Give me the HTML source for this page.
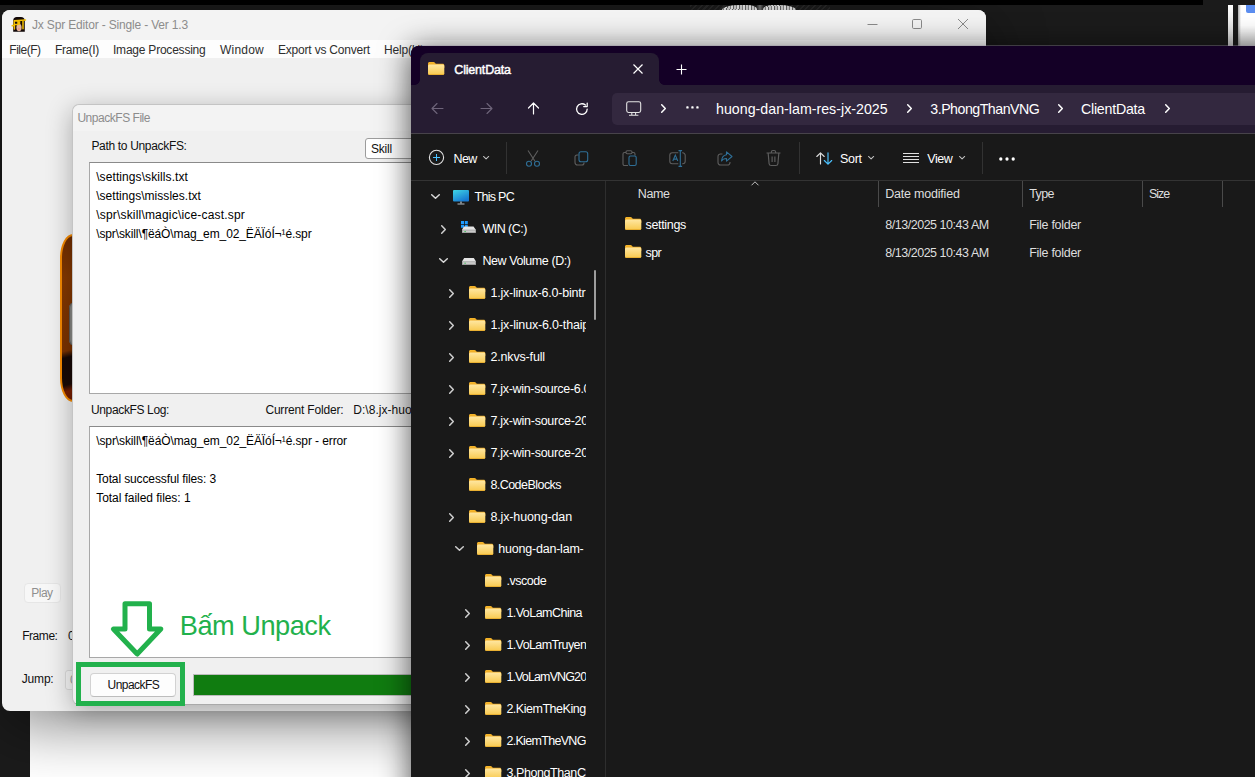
<!DOCTYPE html>
<html><head><meta charset="utf-8"><title>screen</title>
<style>
html,body{margin:0;padding:0;}
body{width:1255px;height:777px;overflow:hidden;background:#1b1b1b;font-family:"Liberation Sans",sans-serif;}
#root{position:relative;width:1255px;height:777px;overflow:hidden;background:#1b1b1b;}
.a{position:absolute;}
.t{position:absolute;white-space:nowrap;}
svg{position:absolute;overflow:visible;}
#mw{left:2px;top:10px;width:984px;height:701px;border-radius:8px;background:#f0f0f0;box-shadow:0 16px 60px rgba(0,0,0,0.45);}
#mwc{left:0;top:0;width:984px;height:701px;border-radius:8px;overflow:hidden;}
#dlg{left:72px;top:104px;width:620px;height:601px;border-radius:7px 7px 0 7px;background:#f0f0f0;border:1px solid #c4c4c4;border-bottom-color:#a9a9a9;box-sizing:border-box;box-shadow:0 6px 26px rgba(0,0,0,0.3);}
#ex{left:411px;top:46px;width:900px;height:800px;border-radius:8px;background:#191919;box-shadow:0 4px 30px 2px rgba(0,0,0,0.62);}
#exc{left:0;top:0;width:900px;height:800px;border-radius:8px;overflow:hidden;}

</style></head><body>
<div id="root">
<div class="a" style="left:0;top:0;width:1203px;height:5px;background:#000"></div><div class="a" style="left:1228px;top:5px;width:5px;height:41px;background:linear-gradient(#fff,#d0d0d0)"></div><div class="a" style="left:1237.5px;top:5px;width:18px;height:41px;background:linear-gradient(90deg,#aaa 0,#fff 3px,#fff),#fff"></div><div class="a" style="left:1237.5px;top:5px;width:18px;height:41px;background:linear-gradient(rgba(255,255,255,0),rgba(255,255,255,0) 50%,rgba(0,0,0,0.18))"></div><div class="a" style="left:1246px;top:5px;width:12px;height:8px;border-radius:0 0 0 2px;background:#5b8def"></div><div class="a" style="left:690px;top:5px;width:140px;height:5px;background:repeating-linear-gradient(135deg,#2e2e2e 0 1.500px,#1c1c1c 1.500px 4px);opacity:.7"></div><div class="a" style="left:722px;top:5px;width:35px;height:5px;border-radius:18px 10px 0 0/5px 4px 0 0;background:repeating-linear-gradient(100deg,#d6d6d6 0 2px,#8a8a8a 2px 3px,#efefef 3px 5px,#6a6a6a 5px 6px)"></div><div class="a" style="left:763px;top:5px;width:33px;height:5px;border-radius:10px 18px 0 0/4px 5px 0 0;background:repeating-linear-gradient(80deg,#d6d6d6 0 2px,#8a8a8a 2px 3px,#efefef 3px 5px,#6a6a6a 5px 6px)"></div><div class="a" style="left:757px;top:5px;width:6px;height:5px;background:linear-gradient(90deg,#333,#777,#333)"></div><div class="a" style="left:30px;top:700px;width:390px;height:80px;background:#fff"></div><div id="mw" class="a"><div id="mwc" class="a"><div class="a" style="left:0;top:0;width:984px;height:30px;background:#f3f3f3"></div><div class="a" style="left:0;top:30px;width:984px;height:18px;background:#fdfdfd"></div></div></div><svg style="left:11px;top:16px" width="16" height="17" viewBox="11 16 16 17"><path d="M13.200 31.800V20.500c0-2 1.500-3.500 3.500-3.500h4.300c2.200 0 3.800 1.600 3.800 3.800v11z" fill="#120808"/><ellipse cx="19" cy="27.500" rx="2.600" ry="3.800" fill="#e3b49a"/><ellipse cx="18.800" cy="29" rx="1" ry=".8" fill="#f08a6a"/><path d="M12.200 25.800l2-.6V20.800l11.300-.7M14.800 21h3.200v3.600h-3M14.400 25.500v3.500M19.500 20.600v3.400M23 20.700v8" stroke="#f5c000" stroke-width="1.500" fill="none" stroke-linecap="round" stroke-linejoin="round"/></svg><div class="t" style="left:32.0px;top:19.0px;font-size:12px;line-height:12px;color:#8c8c8c;letter-spacing:-0.169px;">Jx Spr Editor - Single - Ver 1.3</div>
<svg style="left:866px;top:18px" width="104" height="12" viewBox="0 0 104 12" fill="none" stroke="#8a8a8a" stroke-width="1"><path d="M1.5 6.5h10"/><rect x="46.5" y="1.5" width="9" height="9" rx="1.2"/><path d="M92 1l10 10M102 1l-10 10"/></svg><div class="t" style="left:9.3px;top:44.0px;font-size:12px;line-height:12px;color:#2e2e2e;letter-spacing:-0.494px;">File(F)</div>
<div class="t" style="left:55.0px;top:44.0px;font-size:12px;line-height:12px;color:#2e2e2e;letter-spacing:-0.249px;">Frame(I)</div>
<div class="t" style="left:113.0px;top:44.0px;font-size:12px;line-height:12px;color:#2e2e2e;letter-spacing:-0.221px;">Image Processing</div>
<div class="t" style="left:220.0px;top:44.0px;font-size:12px;line-height:12px;color:#2e2e2e;letter-spacing:0.220px;">Window</div>
<div class="t" style="left:278.0px;top:44.0px;font-size:12px;line-height:12px;color:#2e2e2e;letter-spacing:-0.198px;">Export vs Convert</div>
<div class="t" style="left:384.0px;top:44.0px;font-size:12px;line-height:12px;color:#2e2e2e;letter-spacing:-0.191px;">Help(H)</div>
<div class="a" style="left:60px;top:234px;width:30px;height:168px;border-radius:13px/24px;border:2px solid #f58a00;box-sizing:border-box;background:linear-gradient(166deg,#6e2c00 0,#843800 25%,#7a3200 68%,#140806 72%,#1a0a06 88%,#7a1e00 92%,#6a1a00 100%)"></div><div class="a" style="left:68.5px;top:302px;width:12px;height:44px;border-radius:6px;background:#8c8c88;box-shadow:inset 1px 0 1px #555"></div><div class="a" style="left:24px;top:583px;width:36.5px;height:20px;border-radius:4px;background:#f7f7f7;border:1px solid #e6e6e6;box-sizing:border-box"></div><div class="t" style="left:31.3px;top:587.0px;font-size:12px;line-height:12px;color:#8f8f8f;letter-spacing:-0.536px;">Play</div>
<div class="t" style="left:22.2px;top:630.0px;font-size:12px;line-height:12px;color:#111;letter-spacing:-0.450px;">Frame:</div>
<div class="t" style="left:68.0px;top:630.0px;font-size:12px;line-height:12px;color:#111;letter-spacing:0.000px;">0</div>
<div class="t" style="left:21.8px;top:673.0px;font-size:12px;line-height:12px;color:#111;letter-spacing:-0.195px;">Jump:</div>
<div class="a" style="left:65px;top:670px;width:30px;height:19.5px;border-radius:3px;background:#f7f7f7;border:1px solid #dcdcdc;box-sizing:border-box"></div><div class="t" style="left:70.0px;top:674.0px;font-size:12px;line-height:12px;color:#999;letter-spacing:0.000px;">0</div>
<div id="dlg" class="a"><div class="a" style="left:0;top:0;width:618px;height:26px;background:#f3f3f3;border-radius:7px 7px 0 0"></div></div><div class="t" style="left:77.4px;top:112.0px;font-size:12px;line-height:12px;color:#8c8c8c;letter-spacing:-0.468px;">UnpackFS File</div>
<div class="t" style="left:91.4px;top:140.0px;font-size:12px;line-height:12px;color:#111;letter-spacing:-0.324px;">Path to UnpackFS:</div>
<div class="a" style="left:365px;top:138px;width:120px;height:21px;border-radius:3px;background:#fff;border:1px solid #9c9c9c;box-sizing:border-box"></div><div class="t" style="left:371.0px;top:143.0px;font-size:12px;line-height:12px;color:#111;letter-spacing:-0.201px;">Skill</div>
<div class="a" style="left:89px;top:162px;width:400px;height:232px;background:#fff;border:1px solid #a8a8a8;border-top-color:#8a8a8a;box-sizing:border-box"></div><div class="t" style="left:96.2px;top:171.0px;font-size:12px;line-height:12px;color:#000;letter-spacing:0.089px;">\settings\skills.txt</div>
<div class="t" style="left:96.2px;top:190.0px;font-size:12px;line-height:12px;color:#000;letter-spacing:0.037px;">\settings\missles.txt</div>
<div class="t" style="left:96.2px;top:209.0px;font-size:12px;line-height:12px;color:#000;letter-spacing:0.188px;">\spr\skill\magic\ice-cast.spr</div>
<div class="t" style="left:96.2px;top:228.0px;font-size:12px;line-height:12px;color:#000;letter-spacing:-0.111px;">\spr\skill\¶ëáÒ\mag_em_02_ËÄÏóÍ¬¹é.spr</div>
<div class="t" style="left:91.0px;top:404.0px;font-size:12px;line-height:12px;color:#111;letter-spacing:-0.362px;">UnpackFS Log:</div>
<div class="t" style="left:265.4px;top:404.0px;font-size:12px;line-height:12px;color:#111;letter-spacing:-0.179px;">Current Folder:</div>
<div class="t" style="left:353.3px;top:404.0px;font-size:12px;line-height:12px;color:#111;letter-spacing:0.035px;">D:\8.jx-huong-dan</div>
<div class="a" style="left:89px;top:426px;width:400px;height:232px;background:#fff;border:1px solid #a8a8a8;border-top-color:#8a8a8a;box-sizing:border-box"></div><div class="t" style="left:96.2px;top:435.0px;font-size:12px;line-height:12px;color:#000;letter-spacing:-0.103px;">\spr\skill\¶ëáÒ\mag_em_02_ËÄÏóÍ¬¹é.spr - error</div>
<div class="t" style="left:96.2px;top:473.0px;font-size:12px;line-height:12px;color:#000;letter-spacing:-0.117px;">Total successful files: 3</div>
<div class="t" style="left:96.2px;top:492.0px;font-size:12px;line-height:12px;color:#000;letter-spacing:-0.051px;">Total failed files: 1</div>
<div class="a" style="left:90px;top:673.3px;width:86px;height:23.3px;border-radius:4px;background:#fdfdfd;border:1px solid #d2d2d2;border-bottom-color:#bdbdbd;box-sizing:border-box"></div><div class="t" style="left:107.5px;top:679.0px;font-size:12px;line-height:12px;color:#111;letter-spacing:-0.527px;">UnpackFS</div>
<div class="a" style="left:193px;top:674px;width:300px;height:22px;background:#e6e6e6;border:1px solid #bcbcbc;box-sizing:border-box"></div><div class="a" style="left:194px;top:675px;width:300px;height:20px;background:#107c10"></div><div class="a" style="left:76px;top:662px;width:109px;height:43.6px;border:5px solid #22b14c;box-sizing:border-box"></div><svg style="left:100px;top:595px" width="80" height="70" viewBox="100 595 80 70"><path d="M125 603.8h24.5v25.2h11.300L137.200 654 113.400 629H125z" fill="#fff" stroke="#22b14c" stroke-width="5" stroke-linejoin="round"/></svg><div class="t" style="left:179.8px;top:611.9px;font-size:27.2px;line-height:27.2px;color:#22b14c;letter-spacing:-0.490px;">Bấm Unpack</div>
<div id="ex" class="a"><div id="exc" class="a"><div class="a" style="left:0;top:-1px;width:900px;height:800px"><div class="a" style="left:0;top:0;width:900px;height:45px;background:#140026"></div><div class="a" style="left:0;top:40px;width:900px;height:49px;background:#261c32"></div><div class="a" style="left:0;top:0;width:900px;height:40px;background:#140026"></div><div class="a" style="left:9px;top:8px;width:239px;height:40px;border-radius:8px 8px 0 0;background:#261c32"></div><div class="a" style="left:4px;top:35px;width:5px;height:5px;background:radial-gradient(circle at 0 0,rgba(0,0,0,0) 4.5px,#261c32 5px)"></div><div class="a" style="left:248px;top:35px;width:5px;height:5px;background:radial-gradient(circle at 100% 0,rgba(0,0,0,0) 4.5px,#261c32 5px)"></div><div class="a" style="left:201px;top:48px;width:720px;height:32px;border-radius:5px;background:#33283f"></div><div class="a" style="left:0;top:88px;width:900px;height:1px;background:#47434a"></div><div class="a" style="left:0;top:135px;width:900px;height:1px;background:#333"></div><div class="a" style="left:194px;top:136px;width:1px;height:700px;background:#2e2e2e"></div></div></div></div><div class="a" style="left:419px;top:45px;width:840px;height:1px;background:rgba(150,140,160,0.35)"></div><svg width="0" height="0" style="left:0;top:0"><defs><linearGradient id="fg" x1="0" y1="0" x2="0" y2="1"><stop offset="0" stop-color="#ffe7a2"/><stop offset="1" stop-color="#f8c94e"/></linearGradient><linearGradient id="ft" x1="0" y1="0" x2="0" y2="1"><stop offset="0" stop-color="#f5b62c"/><stop offset="1" stop-color="#e59a14"/></linearGradient></defs></svg><svg style="left:428.0px;top:62.0px" width="16.3" height="13.0" viewBox="0 0 16.3 13.2" preserveAspectRatio="none"><path d="M0 1.500C0 .7.700 0 1.500 0h4c.5 0 .9.200 1.200.5l1.100 1.200h6.900c.9 0 1.600.7 1.600 1.500v3H0z" fill="url(#ft)"/><path d="M0 4c0-.8.700-1.500 1.500-1.500h13.300c.8 0 1.500.7 1.500 1.500v7.700c0 .8-.7 1.500-1.500 1.500H1.500C.7 13.200 0 12.500 0 11.700z" fill="url(#fg)"/><path d="M0 11.200v.5c0 .8.700 1.500 1.500 1.500h13.300c.8 0 1.500-.7 1.500-1.500v-.5c0 .6-.5 1-1.100 1H1.100C.5 12.200 0 11.800 0 11.200z" fill="#e9b032"/></svg><div class="t" style="left:454.3px;top:63.8px;font-size:12.5px;line-height:12.5px;color:#ffffff;letter-spacing:-0.186px;-webkit-text-stroke:0.45px #fff;">ClientData</div>
<svg style="left:632.5px;top:63.8px" width="10" height="10" viewBox="0 0 10 10" stroke="#fff" stroke-width="1.2" fill="none"><path d="M.5.5l9 9M9.500.5l-9 9"/></svg><svg style="left:676px;top:64px" width="11" height="11" viewBox="0 0 11 11" stroke="#fff" stroke-width="1.1" fill="none"><path d="M5.500.5v10M.5 5.500h10"/></svg><svg style="left:431px;top:102px" width="13" height="13" viewBox="0 0 13 13" stroke="#6e647a" stroke-width="1.1" fill="none" stroke-linecap="round" stroke-linejoin="round"><path d="M12 6.500H1M6 1.500l-5 5 5 5"/></svg><svg style="left:480px;top:102px" width="13" height="13" viewBox="0 0 13 13" stroke="#6e647a" stroke-width="1.1" fill="none" stroke-linecap="round" stroke-linejoin="round"><path d="M1 6.500h11M7 1.500l5 5-5 5"/></svg><svg style="left:527px;top:102px" width="13" height="13" viewBox="0 0 13 13" stroke="#fff" stroke-width="1.2" fill="none" stroke-linecap="round" stroke-linejoin="round"><path d="M6.500 12V1M1.500 6l5-5 5 5"/></svg><svg style="left:575.3px;top:101.7px" width="13.8" height="13.8" viewBox="0 0 13 13" stroke="#fff" stroke-width="1.2" fill="none" stroke-linecap="round" stroke-linejoin="round"><path d="M11.500 6.700A5 5 0 1 1 9.800 2.900M11.500 1v3.300H8.200"/></svg><svg style="left:625.5px;top:101px" width="15.400" height="15" viewBox="0 0 15.400 15" stroke="#e4e4e4" stroke-width="1.100" fill="none" stroke-linejoin="round"><rect x=".7" y=".7" width="14" height="10.800" rx="1.900"/><path d="M3 14.200h9.400M5.800 11.500v2.700M9.600 11.500v2.700"/></svg><svg style="left:660.5px;top:104.0px" width="5" height="9" viewBox="0 0 5 9" stroke="#fff" stroke-width="1.500" fill="none" stroke-linecap="round" stroke-linejoin="round"><path d="M.7.700L4.300 4.500.7 8.300"/></svg><svg style="left:686px;top:106.2px" width="13" height="3" viewBox="0 0 13 3" fill="#fff"><rect x=".3" y=".3" width="2.300" height="2.300" rx=".6"/><rect x="5.300" y=".3" width="2.300" height="2.300" rx=".6"/><rect x="10.300" y=".3" width="2.300" height="2.300" rx=".6"/></svg><div class="t" style="left:716.0px;top:101.9px;font-size:14.2px;line-height:14.2px;color:#ffffff;letter-spacing:0.022px;">huong-dan-lam-res-jx-2025</div>
<svg style="left:906.5px;top:104.0px" width="5" height="9" viewBox="0 0 5 9" stroke="#fff" stroke-width="1.500" fill="none" stroke-linecap="round" stroke-linejoin="round"><path d="M.7.700L4.300 4.500.7 8.300"/></svg><div class="t" style="left:930.3px;top:101.9px;font-size:14.2px;line-height:14.2px;color:#ffffff;letter-spacing:-0.495px;">3.PhongThanVNG</div>
<svg style="left:1058.0px;top:104.0px" width="5" height="9" viewBox="0 0 5 9" stroke="#fff" stroke-width="1.500" fill="none" stroke-linecap="round" stroke-linejoin="round"><path d="M.7.700L4.300 4.500.7 8.300"/></svg><div class="t" style="left:1081.0px;top:101.9px;font-size:14.2px;line-height:14.2px;color:#ffffff;letter-spacing:-0.230px;">ClientData</div>
<svg style="left:1164.5px;top:104.0px" width="5" height="9" viewBox="0 0 5 9" stroke="#fff" stroke-width="1.500" fill="none" stroke-linecap="round" stroke-linejoin="round"><path d="M.7.700L4.300 4.500.7 8.300"/></svg><svg style="left:428px;top:149px" width="17" height="17" viewBox="0 0 17 17" fill="none"><circle cx="8.500" cy="8.400" r="7.100" stroke="#e2e2e2" stroke-width="1.100"/><path d="M8.500 5v7M5 8.500h7" stroke="#4cc2ff" stroke-width="1"/></svg><div class="t" style="left:453.6px;top:152.8px;font-size:12.5px;line-height:12.5px;color:#ffffff;letter-spacing:-0.635px;">New</div>
<svg style="left:482.9px;top:156.3px" width="6.2" height="3.44" viewBox="0 0 9 5" stroke="#c4c4c4" stroke-width="1.500" fill="none" stroke-linecap="round" stroke-linejoin="round"><path d="M.7.700L4.500 4.300 8.300.7"/></svg><div class="a" style="left:506px;top:142px;width:1px;height:32px;background:#323232"></div><svg style="left:526px;top:149.5px" width="14" height="17" viewBox="0 0 14 17" fill="none" stroke-width="1.100"><path d="M2 .5l7 10.800M12 .5l-7 10.800" stroke="#5e5e5e"/><circle cx="3" cy="13.700" r="2.500" stroke="#2f6f97"/><circle cx="11" cy="13.700" r="2.500" stroke="#2f6f97"/></svg><svg style="left:573.5px;top:150.5px" width="15" height="15" viewBox="0 0 15 15" fill="none" stroke-width="1.100"><path d="M4.500 4H3a2 2 0 0 0-2 2v5.500a2.500 2.500 0 0 0 2.500 2.500H8a2 2 0 0 0 2-2v-.5" stroke="#5e5e5e"/><rect x="5" y=".8" width="8.700" height="10" rx="2" stroke="#2f6f97"/></svg><svg style="left:621.5px;top:150px" width="15" height="16" viewBox="0 0 15 16" fill="none" stroke-width="1.100"><path d="M4 2.500H2.500A1.500 1.500 0 0 0 1 4v10a1.500 1.500 0 0 0 1.500 1.500H6M10 2.500h1.500A1.500 1.500 0 0 1 13 4v1.500" stroke="#5e5e5e"/><rect x="4" y=".8" width="6" height="3" rx="1.200" stroke="#5e5e5e"/><rect x="7" y="6" width="7.200" height="9.500" rx="1.500" stroke="#2f6f97"/></svg><svg style="left:668.8px;top:149.5px" width="17" height="17" viewBox="0 0 17 17" fill="none" stroke-width="1.100"><path d="M9.300 2.800H3.300A2.500 2.500 0 0 0 .8 5.300v6a2.500 2.500 0 0 0 2.500 2.500h6M13.200 2.800h.5a2.500 2.500 0 0 1 2.500 2.500v6a2.500 2.500 0 0 1-2.500 2.500h-.5" stroke="#5e5e5e"/><path d="M3.800 11l2.500-6 2.500 6M4.700 9.100h3.200" stroke="#2f6f97" stroke-width="1.050"/><path d="M11.300.6v15.800M9.500.6h3.600M9.500 16.400h3.600" stroke="#2f6f97"/></svg><svg style="left:717.4px;top:150.5px" width="16" height="15" viewBox="0 0 16 15" fill="none" stroke-width="1.100" stroke-linejoin="round"><path d="M5.500 3H3.500A2.500 2.500 0 0 0 1 5.500v6A2.500 2.500 0 0 0 3.500 14h7a2.500 2.500 0 0 0 2.500-2.500V11" stroke="#5e5e5e"/><path d="M9.500.8l5.500 4.700-5.500 4.700V7.500C7 7.500 5.500 8.300 4.500 10c.3-3.500 2-5.800 5-6.300z" stroke="#2f6f97"/></svg><svg style="left:765.8px;top:150px" width="15" height="16" viewBox="0 0 14 16" preserveAspectRatio="none" fill="none" stroke-width="1.100" stroke="#5e5e5e"><path d="M.5 3h13M5 3V2A1.500 1.500 0 0 1 6.500.5h1A1.500 1.500 0 0 1 9 2v1M2 3l.9 10.700A2 2 0 0 0 4.900 15.500h4.200a2 2 0 0 0 2-1.800L12 3M5.700 6.500v5.500M8.300 6.500v5.500"/></svg><div class="a" style="left:799px;top:142px;width:1px;height:32px;background:#323232"></div><svg style="left:815.8px;top:152px" width="17" height="13" viewBox="0 0 17 13" fill="none" stroke-width="1.150" stroke-linecap="round" stroke-linejoin="round"><path d="M4.500 12V.8M.8 4.500L4.500.8 8.200 4.500" stroke="#dcdcdc"/><path d="M12 .8v11.400M8.300 8.500l3.700 3.700 3.700-3.700" stroke="#4cc2ff"/></svg><div class="t" style="left:840.0px;top:152.8px;font-size:12.5px;line-height:12.5px;color:#ffffff;letter-spacing:-0.306px;">Sort</div>
<svg style="left:868.1px;top:156.3px" width="6.2" height="3.44" viewBox="0 0 9 5" stroke="#c4c4c4" stroke-width="1.500" fill="none" stroke-linecap="round" stroke-linejoin="round"><path d="M.7.700L4.500 4.300 8.300.7"/></svg><svg style="left:903px;top:153px" width="16" height="10" viewBox="0 0 16 10" stroke="#e0e0e0" stroke-width="1"><path d="M0 .5h16M0 3.500h16M0 6.500h16M0 9.500h16"/></svg><div class="t" style="left:927.3px;top:152.8px;font-size:12.5px;line-height:12.5px;color:#ffffff;letter-spacing:-0.442px;">View</div>
<svg style="left:958.9px;top:156.3px" width="6.2" height="3.44" viewBox="0 0 9 5" stroke="#c4c4c4" stroke-width="1.500" fill="none" stroke-linecap="round" stroke-linejoin="round"><path d="M.7.700L4.500 4.300 8.300.7"/></svg><div class="a" style="left:982px;top:142px;width:1px;height:32px;background:#323232"></div><svg style="left:999px;top:156.600px" width="17" height="4" viewBox="0 0 17 4" fill="#fff"><circle cx="1.800" cy="2" r="1.650"/><circle cx="8" cy="2" r="1.650"/><circle cx="14.200" cy="2" r="1.650"/></svg><div class="t" style="left:637.8px;top:187.8px;font-size:12.5px;line-height:12.5px;color:#dedede;letter-spacing:-0.410px;">Name</div>
<svg style="left:750.9px;top:180.800px" width="8" height="5" viewBox="0 0 8 5" stroke="#c0c0c0" stroke-width="1" fill="none"><path d="M.5 4.300L4 .8l3.500 3.500"/></svg><div class="a" style="left:878px;top:181px;width:1px;height:26px;background:#4a4a4a"></div><div class="a" style="left:1022px;top:181px;width:1px;height:26px;background:#4a4a4a"></div><div class="a" style="left:1142px;top:181px;width:1px;height:26px;background:#4a4a4a"></div><div class="a" style="left:1222px;top:181px;width:1px;height:26px;background:#4a4a4a"></div><div class="t" style="left:885.2px;top:187.8px;font-size:12.5px;line-height:12.5px;color:#dedede;letter-spacing:-0.201px;">Date modified</div>
<div class="t" style="left:1029.2px;top:187.8px;font-size:12.5px;line-height:12.5px;color:#dedede;letter-spacing:-0.574px;">Type</div>
<div class="t" style="left:1149.0px;top:187.8px;font-size:12.5px;line-height:12.5px;color:#dedede;letter-spacing:-1.079px;">Size</div>
<svg style="left:624.8px;top:217.0px" width="16.3" height="13.0" viewBox="0 0 16.3 13.2" preserveAspectRatio="none"><path d="M0 1.500C0 .7.700 0 1.500 0h4c.5 0 .9.200 1.200.5l1.100 1.200h6.900c.9 0 1.600.7 1.600 1.500v3H0z" fill="url(#ft)"/><path d="M0 4c0-.8.700-1.500 1.500-1.500h13.300c.8 0 1.500.7 1.500 1.500v7.700c0 .8-.7 1.500-1.500 1.500H1.500C.7 13.200 0 12.500 0 11.700z" fill="url(#fg)"/><path d="M0 11.200v.5c0 .8.700 1.500 1.500 1.500h13.300c.8 0 1.500-.7 1.500-1.500v-.5c0 .6-.5 1-1.100 1H1.100C.5 12.200 0 11.800 0 11.200z" fill="#e9b032"/></svg><div class="t" style="left:645.5px;top:218.8px;font-size:12.5px;line-height:12.5px;color:#ffffff;letter-spacing:-0.322px;">settings</div>
<div class="t" style="left:885.2px;top:218.8px;font-size:12.5px;line-height:12.5px;color:#dedede;letter-spacing:-0.466px;">8/13/2025 10:43 AM</div>
<div class="t" style="left:1029.2px;top:218.8px;font-size:12.5px;line-height:12.5px;color:#dedede;letter-spacing:-0.280px;">File folder</div>
<svg style="left:624.8px;top:245.0px" width="16.3" height="13.0" viewBox="0 0 16.3 13.2" preserveAspectRatio="none"><path d="M0 1.500C0 .7.700 0 1.500 0h4c.5 0 .9.200 1.200.5l1.100 1.200h6.900c.9 0 1.600.7 1.600 1.500v3H0z" fill="url(#ft)"/><path d="M0 4c0-.8.700-1.500 1.500-1.500h13.300c.8 0 1.500.7 1.500 1.500v7.700c0 .8-.7 1.500-1.500 1.500H1.500C.7 13.200 0 12.500 0 11.700z" fill="url(#fg)"/><path d="M0 11.200v.5c0 .8.700 1.500 1.500 1.500h13.300c.8 0 1.500-.7 1.500-1.500v-.5c0 .6-.5 1-1.100 1H1.100C.5 12.200 0 11.800 0 11.200z" fill="#e9b032"/></svg><div class="t" style="left:645.5px;top:246.8px;font-size:12.5px;line-height:12.5px;color:#ffffff;letter-spacing:-0.621px;">spr</div>
<div class="t" style="left:885.2px;top:246.8px;font-size:12.5px;line-height:12.5px;color:#dedede;letter-spacing:-0.466px;">8/13/2025 10:43 AM</div>
<div class="t" style="left:1029.2px;top:246.8px;font-size:12.5px;line-height:12.5px;color:#dedede;letter-spacing:-0.280px;">File folder</div>
<svg style="left:431.0px;top:194.0px" width="9" height="5.00" viewBox="0 0 9 5" stroke="#d8d8d8" stroke-width="1.500" fill="none" stroke-linecap="round" stroke-linejoin="round"><path d="M.7.700L4.500 4.300 8.300.7"/></svg><svg style="left:453px;top:190px" width="16" height="15" viewBox="0 0 16 15"><defs><linearGradient id="pcg" x1="0" y1="0" x2=".6" y2="1"><stop offset="0" stop-color="#3fd6e4"/><stop offset="1" stop-color="#1678d2"/></linearGradient></defs><rect x="0" y="0" width="16" height="11.500" rx="1" fill="url(#pcg)"/><path d="M7.200 11.500h1.600v2h-1.600z" fill="#9aa4ab"/><path d="M4.500 13.500h7v1h-7z" fill="#b4bcc2"/></svg><div class="t" style="left:474.5px;top:190.8px;font-size:12.5px;line-height:12.5px;color:#ffffff;letter-spacing:-0.707px;">This PC</div>
<svg style="left:441.1px;top:225.0px" width="5" height="9" viewBox="0 0 5 9" stroke="#cfcfcf" stroke-width="1.500" fill="none" stroke-linecap="round" stroke-linejoin="round"><path d="M.7.700L4.300 4.500.7 8.300"/></svg><svg style="left:461px;top:221px" width="15" height="12" viewBox="0 0 15 12"><path d="M0 0h3v3H0zM3.800 0h3v3h-3zM0 3.800h3v3H0zM3.800 3.800h3v3h-3z" fill="#1e9bff"/><path d="M3 5.500h9.500L14.800 8.800v3H1v-3z" fill="#e4e4e4"/><rect x="1" y="8.800" width="13.800" height="3" rx=".6" fill="#8c8c8c"/><rect x="1.500" y="9.300" width="12.800" height="2" fill="#c9c9c9"/><rect x="3.500" y="10" width="1.200" height="1" fill="#20c040"/></svg><div class="t" style="left:482.4px;top:222.8px;font-size:12.5px;line-height:12.5px;color:#ffffff;letter-spacing:-0.512px;">WIN (C:)</div>
<svg style="left:439.0px;top:258.3px" width="9" height="5.00" viewBox="0 0 9 5" stroke="#d8d8d8" stroke-width="1.500" fill="none" stroke-linecap="round" stroke-linejoin="round"><path d="M.7.700L4.500 4.300 8.300.7"/></svg><svg style="left:462px;top:258px" width="14" height="7" viewBox="0 0 14 7"><path d="M2.200 0h9.600L14 3.500v3.300H0V3.500z" fill="#e4e4e4"/><rect x="0" y="3.500" width="14" height="3.300" rx=".6" fill="#8c8c8c"/><rect x=".6" y="4.100" width="12.800" height="2.100" fill="#c9c9c9"/><rect x="2.500" y="4.700" width="1.200" height="1" fill="#20c040"/></svg><div class="t" style="left:482.4px;top:254.8px;font-size:12.5px;line-height:12.5px;color:#ffffff;letter-spacing:-0.418px;">New Volume (D:)</div>
<svg style="left:449.0px;top:288.9px" width="5" height="9" viewBox="0 0 5 9" stroke="#cfcfcf" stroke-width="1.500" fill="none" stroke-linecap="round" stroke-linejoin="round"><path d="M.7.700L4.300 4.500.7 8.300"/></svg><svg style="left:468.9px;top:285.8px" width="16.3" height="13.0" viewBox="0 0 16.3 13.2" preserveAspectRatio="none"><path d="M0 1.500C0 .7.700 0 1.500 0h4c.5 0 .9.200 1.200.5l1.100 1.200h6.900c.9 0 1.600.7 1.600 1.500v3H0z" fill="url(#ft)"/><path d="M0 4c0-.8.700-1.500 1.500-1.500h13.300c.8 0 1.500.7 1.500 1.500v7.700c0 .8-.7 1.500-1.500 1.500H1.500C.7 13.200 0 12.500 0 11.700z" fill="url(#fg)"/><path d="M0 11.200v.5c0 .8.700 1.500 1.500 1.500h13.300c.8 0 1.500-.7 1.500-1.500v-.5c0 .6-.5 1-1.100 1H1.100C.5 12.200 0 11.800 0 11.200z" fill="#e9b032"/></svg><div class="t" style="left:490.4px;top:286.8px;font-size:12.5px;line-height:12.5px;color:#ffffff;letter-spacing:-0.209px;width:95.60000000000002px;overflow:hidden;padding-bottom:4px;">1.jx-linux-6.0-bintr</div>
<svg style="left:449.0px;top:320.9px" width="5" height="9" viewBox="0 0 5 9" stroke="#cfcfcf" stroke-width="1.500" fill="none" stroke-linecap="round" stroke-linejoin="round"><path d="M.7.700L4.300 4.500.7 8.300"/></svg><svg style="left:468.9px;top:317.8px" width="16.3" height="13.0" viewBox="0 0 16.3 13.2" preserveAspectRatio="none"><path d="M0 1.500C0 .7.700 0 1.500 0h4c.5 0 .9.200 1.200.5l1.100 1.200h6.900c.9 0 1.600.7 1.600 1.500v3H0z" fill="url(#ft)"/><path d="M0 4c0-.8.700-1.500 1.500-1.500h13.300c.8 0 1.500.7 1.500 1.500v7.700c0 .8-.7 1.500-1.500 1.500H1.500C.7 13.200 0 12.500 0 11.700z" fill="url(#fg)"/><path d="M0 11.200v.5c0 .8.700 1.500 1.500 1.500h13.300c.8 0 1.500-.7 1.500-1.500v-.5c0 .6-.5 1-1.100 1H1.100C.5 12.200 0 11.800 0 11.200z" fill="#e9b032"/></svg><div class="t" style="left:490.4px;top:318.8px;font-size:12.5px;line-height:12.5px;color:#ffffff;letter-spacing:-0.172px;width:95.60000000000002px;overflow:hidden;padding-bottom:4px;">1.jx-linux-6.0-thaip</div>
<svg style="left:449.0px;top:352.9px" width="5" height="9" viewBox="0 0 5 9" stroke="#cfcfcf" stroke-width="1.500" fill="none" stroke-linecap="round" stroke-linejoin="round"><path d="M.7.700L4.300 4.500.7 8.300"/></svg><svg style="left:468.9px;top:349.8px" width="16.3" height="13.0" viewBox="0 0 16.3 13.2" preserveAspectRatio="none"><path d="M0 1.500C0 .7.700 0 1.500 0h4c.5 0 .9.200 1.200.5l1.100 1.200h6.900c.9 0 1.600.7 1.600 1.500v3H0z" fill="url(#ft)"/><path d="M0 4c0-.8.700-1.500 1.500-1.500h13.300c.8 0 1.500.7 1.500 1.500v7.700c0 .8-.7 1.500-1.500 1.500H1.500C.7 13.200 0 12.500 0 11.700z" fill="url(#fg)"/><path d="M0 11.200v.5c0 .8.700 1.500 1.500 1.500h13.300c.8 0 1.500-.7 1.500-1.500v-.5c0 .6-.5 1-1.100 1H1.100C.5 12.200 0 11.800 0 11.200z" fill="#e9b032"/></svg><div class="t" style="left:490.4px;top:350.8px;font-size:12.5px;line-height:12.5px;color:#ffffff;letter-spacing:-0.151px;width:95.60000000000002px;overflow:hidden;padding-bottom:4px;">2.nkvs-full</div>
<svg style="left:449.0px;top:384.9px" width="5" height="9" viewBox="0 0 5 9" stroke="#cfcfcf" stroke-width="1.500" fill="none" stroke-linecap="round" stroke-linejoin="round"><path d="M.7.700L4.300 4.500.7 8.300"/></svg><svg style="left:468.9px;top:381.8px" width="16.3" height="13.0" viewBox="0 0 16.3 13.2" preserveAspectRatio="none"><path d="M0 1.500C0 .7.700 0 1.500 0h4c.5 0 .9.200 1.200.5l1.100 1.200h6.900c.9 0 1.600.7 1.600 1.500v3H0z" fill="url(#ft)"/><path d="M0 4c0-.8.700-1.500 1.500-1.500h13.300c.8 0 1.500.7 1.500 1.500v7.700c0 .8-.7 1.500-1.500 1.500H1.500C.7 13.200 0 12.500 0 11.700z" fill="url(#fg)"/><path d="M0 11.200v.5c0 .8.700 1.500 1.500 1.500h13.300c.8 0 1.500-.7 1.500-1.500v-.5c0 .6-.5 1-1.100 1H1.100C.5 12.200 0 11.800 0 11.200z" fill="#e9b032"/></svg><div class="t" style="left:490.4px;top:382.8px;font-size:12.5px;line-height:12.5px;color:#ffffff;letter-spacing:-0.302px;width:95.60000000000002px;overflow:hidden;padding-bottom:4px;">7.jx-win-source-6.0</div>
<svg style="left:449.0px;top:416.9px" width="5" height="9" viewBox="0 0 5 9" stroke="#cfcfcf" stroke-width="1.500" fill="none" stroke-linecap="round" stroke-linejoin="round"><path d="M.7.700L4.300 4.500.7 8.300"/></svg><svg style="left:468.9px;top:413.8px" width="16.3" height="13.0" viewBox="0 0 16.3 13.2" preserveAspectRatio="none"><path d="M0 1.500C0 .7.700 0 1.500 0h4c.5 0 .9.200 1.200.5l1.100 1.200h6.900c.9 0 1.600.7 1.600 1.500v3H0z" fill="url(#ft)"/><path d="M0 4c0-.8.700-1.500 1.500-1.500h13.300c.8 0 1.500.7 1.500 1.500v7.700c0 .8-.7 1.500-1.500 1.500H1.500C.7 13.200 0 12.500 0 11.700z" fill="url(#fg)"/><path d="M0 11.200v.5c0 .8.700 1.500 1.500 1.500h13.300c.8 0 1.500-.7 1.500-1.500v-.5c0 .6-.5 1-1.100 1H1.100C.5 12.200 0 11.800 0 11.200z" fill="#e9b032"/></svg><div class="t" style="left:490.4px;top:414.8px;font-size:12.5px;line-height:12.5px;color:#ffffff;letter-spacing:-0.251px;width:95.60000000000002px;overflow:hidden;padding-bottom:4px;">7.jx-win-source-20</div>
<svg style="left:449.0px;top:448.9px" width="5" height="9" viewBox="0 0 5 9" stroke="#cfcfcf" stroke-width="1.500" fill="none" stroke-linecap="round" stroke-linejoin="round"><path d="M.7.700L4.300 4.500.7 8.300"/></svg><svg style="left:468.9px;top:445.8px" width="16.3" height="13.0" viewBox="0 0 16.3 13.2" preserveAspectRatio="none"><path d="M0 1.500C0 .7.700 0 1.500 0h4c.5 0 .9.200 1.200.5l1.100 1.200h6.900c.9 0 1.600.7 1.600 1.500v3H0z" fill="url(#ft)"/><path d="M0 4c0-.8.700-1.500 1.500-1.500h13.300c.8 0 1.500.7 1.500 1.500v7.700c0 .8-.7 1.500-1.500 1.500H1.500C.7 13.200 0 12.500 0 11.700z" fill="url(#fg)"/><path d="M0 11.200v.5c0 .8.700 1.500 1.500 1.500h13.300c.8 0 1.500-.7 1.500-1.500v-.5c0 .6-.5 1-1.100 1H1.100C.5 12.200 0 11.800 0 11.200z" fill="#e9b032"/></svg><div class="t" style="left:490.4px;top:446.8px;font-size:12.5px;line-height:12.5px;color:#ffffff;letter-spacing:-0.251px;width:95.60000000000002px;overflow:hidden;padding-bottom:4px;">7.jx-win-source-20</div>
<svg style="left:468.9px;top:477.8px" width="16.3" height="13.0" viewBox="0 0 16.3 13.2" preserveAspectRatio="none"><path d="M0 1.500C0 .7.700 0 1.500 0h4c.5 0 .9.200 1.200.5l1.100 1.200h6.900c.9 0 1.600.7 1.600 1.500v3H0z" fill="url(#ft)"/><path d="M0 4c0-.8.700-1.500 1.500-1.500h13.300c.8 0 1.500.7 1.500 1.500v7.700c0 .8-.7 1.500-1.500 1.500H1.500C.7 13.200 0 12.500 0 11.700z" fill="url(#fg)"/><path d="M0 11.200v.5c0 .8.700 1.500 1.500 1.500h13.300c.8 0 1.500-.7 1.500-1.500v-.5c0 .6-.5 1-1.100 1H1.100C.5 12.200 0 11.800 0 11.200z" fill="#e9b032"/></svg><div class="t" style="left:490.4px;top:478.8px;font-size:12.5px;line-height:12.5px;color:#ffffff;letter-spacing:-0.543px;width:95.60000000000002px;overflow:hidden;padding-bottom:4px;">8.CodeBlocks</div>
<svg style="left:449.0px;top:512.9px" width="5" height="9" viewBox="0 0 5 9" stroke="#cfcfcf" stroke-width="1.500" fill="none" stroke-linecap="round" stroke-linejoin="round"><path d="M.7.700L4.300 4.500.7 8.300"/></svg><svg style="left:468.9px;top:509.8px" width="16.3" height="13.0" viewBox="0 0 16.3 13.2" preserveAspectRatio="none"><path d="M0 1.500C0 .7.700 0 1.500 0h4c.5 0 .9.200 1.200.5l1.100 1.200h6.900c.9 0 1.600.7 1.600 1.500v3H0z" fill="url(#ft)"/><path d="M0 4c0-.8.700-1.500 1.500-1.500h13.300c.8 0 1.500.7 1.500 1.500v7.700c0 .8-.7 1.500-1.500 1.500H1.500C.7 13.200 0 12.500 0 11.700z" fill="url(#fg)"/><path d="M0 11.200v.5c0 .8.700 1.500 1.500 1.500h13.300c.8 0 1.500-.7 1.500-1.500v-.5c0 .6-.5 1-1.100 1H1.100C.5 12.200 0 11.800 0 11.200z" fill="#e9b032"/></svg><div class="t" style="left:490.4px;top:510.8px;font-size:12.5px;line-height:12.5px;color:#ffffff;letter-spacing:-0.127px;width:95.60000000000002px;overflow:hidden;padding-bottom:4px;">8.jx-huong-dan</div>
<svg style="left:455.0px;top:546.1px" width="9" height="5.00" viewBox="0 0 9 5" stroke="#cfcfcf" stroke-width="1.500" fill="none" stroke-linecap="round" stroke-linejoin="round"><path d="M.7.700L4.500 4.300 8.300.7"/></svg><svg style="left:476.9px;top:541.8px" width="16.3" height="13.0" viewBox="0 0 16.3 13.2" preserveAspectRatio="none"><path d="M0 1.500C0 .7.700 0 1.500 0h4c.5 0 .9.200 1.200.5l1.100 1.200h6.900c.9 0 1.600.7 1.600 1.500v3H0z" fill="url(#ft)"/><path d="M0 4c0-.8.700-1.500 1.500-1.500h13.300c.8 0 1.500.7 1.500 1.500v7.700c0 .8-.7 1.500-1.500 1.500H1.500C.7 13.200 0 12.500 0 11.700z" fill="url(#fg)"/><path d="M0 11.200v.5c0 .8.700 1.500 1.500 1.500h13.300c.8 0 1.500-.7 1.500-1.500v-.5c0 .6-.5 1-1.100 1H1.100C.5 12.200 0 11.800 0 11.200z" fill="#e9b032"/></svg><div class="t" style="left:498.3px;top:542.8px;font-size:12.5px;line-height:12.5px;color:#ffffff;letter-spacing:-0.213px;width:87.69999999999999px;overflow:hidden;padding-bottom:4px;">huong-dan-lam-</div>
<svg style="left:485.0px;top:573.8px" width="16.3" height="13.0" viewBox="0 0 16.3 13.2" preserveAspectRatio="none"><path d="M0 1.500C0 .7.700 0 1.500 0h4c.5 0 .9.200 1.200.5l1.100 1.200h6.900c.9 0 1.600.7 1.600 1.500v3H0z" fill="url(#ft)"/><path d="M0 4c0-.8.700-1.500 1.500-1.500h13.300c.8 0 1.500.7 1.500 1.500v7.700c0 .8-.7 1.500-1.500 1.500H1.500C.7 13.200 0 12.500 0 11.700z" fill="url(#fg)"/><path d="M0 11.200v.5c0 .8.700 1.500 1.500 1.500h13.300c.8 0 1.500-.7 1.500-1.500v-.5c0 .6-.5 1-1.100 1H1.100C.5 12.200 0 11.800 0 11.200z" fill="#e9b032"/></svg><div class="t" style="left:506.4px;top:574.8px;font-size:12.5px;line-height:12.5px;color:#ffffff;letter-spacing:-0.482px;width:79.60000000000002px;overflow:hidden;padding-bottom:4px;">.vscode</div>
<svg style="left:465.0px;top:608.9px" width="5" height="9" viewBox="0 0 5 9" stroke="#cfcfcf" stroke-width="1.500" fill="none" stroke-linecap="round" stroke-linejoin="round"><path d="M.7.700L4.300 4.500.7 8.300"/></svg><svg style="left:485.0px;top:605.8px" width="16.3" height="13.0" viewBox="0 0 16.3 13.2" preserveAspectRatio="none"><path d="M0 1.500C0 .7.700 0 1.500 0h4c.5 0 .9.200 1.200.5l1.100 1.200h6.900c.9 0 1.600.7 1.600 1.500v3H0z" fill="url(#ft)"/><path d="M0 4c0-.8.700-1.500 1.500-1.500h13.300c.8 0 1.500.7 1.500 1.500v7.700c0 .8-.7 1.500-1.500 1.500H1.500C.7 13.200 0 12.500 0 11.700z" fill="url(#fg)"/><path d="M0 11.200v.5c0 .8.700 1.500 1.500 1.500h13.300c.8 0 1.500-.7 1.500-1.500v-.5c0 .6-.5 1-1.100 1H1.100C.5 12.200 0 11.800 0 11.200z" fill="#e9b032"/></svg><div class="t" style="left:506.4px;top:606.8px;font-size:12.5px;line-height:12.5px;color:#ffffff;letter-spacing:-0.533px;width:79.60000000000002px;overflow:hidden;padding-bottom:4px;">1.VoLamChina</div>
<svg style="left:465.0px;top:640.9px" width="5" height="9" viewBox="0 0 5 9" stroke="#cfcfcf" stroke-width="1.500" fill="none" stroke-linecap="round" stroke-linejoin="round"><path d="M.7.700L4.300 4.500.7 8.300"/></svg><svg style="left:485.0px;top:637.8px" width="16.3" height="13.0" viewBox="0 0 16.3 13.2" preserveAspectRatio="none"><path d="M0 1.500C0 .7.700 0 1.500 0h4c.5 0 .9.200 1.200.5l1.100 1.200h6.900c.9 0 1.600.7 1.600 1.500v3H0z" fill="url(#ft)"/><path d="M0 4c0-.8.700-1.500 1.500-1.500h13.300c.8 0 1.500.7 1.500 1.500v7.700c0 .8-.7 1.500-1.500 1.500H1.500C.7 13.200 0 12.500 0 11.700z" fill="url(#fg)"/><path d="M0 11.200v.5c0 .8.700 1.500 1.500 1.500h13.300c.8 0 1.500-.7 1.500-1.500v-.5c0 .6-.5 1-1.100 1H1.100C.5 12.200 0 11.800 0 11.200z" fill="#e9b032"/></svg><div class="t" style="left:506.4px;top:638.8px;font-size:12.5px;line-height:12.5px;color:#ffffff;letter-spacing:-0.606px;width:79.60000000000002px;overflow:hidden;padding-bottom:4px;">1.VoLamTruyenKy</div>
<svg style="left:465.0px;top:672.9px" width="5" height="9" viewBox="0 0 5 9" stroke="#cfcfcf" stroke-width="1.500" fill="none" stroke-linecap="round" stroke-linejoin="round"><path d="M.7.700L4.300 4.500.7 8.300"/></svg><svg style="left:485.0px;top:669.8px" width="16.3" height="13.0" viewBox="0 0 16.3 13.2" preserveAspectRatio="none"><path d="M0 1.500C0 .7.700 0 1.500 0h4c.5 0 .9.200 1.200.5l1.100 1.200h6.900c.9 0 1.600.7 1.600 1.500v3H0z" fill="url(#ft)"/><path d="M0 4c0-.8.700-1.500 1.500-1.500h13.300c.8 0 1.500.7 1.500 1.500v7.700c0 .8-.7 1.500-1.500 1.500H1.500C.7 13.200 0 12.500 0 11.700z" fill="url(#fg)"/><path d="M0 11.200v.5c0 .8.700 1.500 1.500 1.500h13.300c.8 0 1.500-.7 1.500-1.500v-.5c0 .6-.5 1-1.100 1H1.100C.5 12.200 0 11.800 0 11.200z" fill="#e9b032"/></svg><div class="t" style="left:506.4px;top:670.8px;font-size:12.5px;line-height:12.5px;color:#ffffff;letter-spacing:-0.871px;width:79.60000000000002px;overflow:hidden;padding-bottom:4px;">1.VoLamVNG2005</div>
<svg style="left:465.0px;top:704.9px" width="5" height="9" viewBox="0 0 5 9" stroke="#cfcfcf" stroke-width="1.500" fill="none" stroke-linecap="round" stroke-linejoin="round"><path d="M.7.700L4.300 4.500.7 8.300"/></svg><svg style="left:485.0px;top:701.8px" width="16.3" height="13.0" viewBox="0 0 16.3 13.2" preserveAspectRatio="none"><path d="M0 1.500C0 .7.700 0 1.500 0h4c.5 0 .9.200 1.200.5l1.100 1.200h6.900c.9 0 1.600.7 1.600 1.500v3H0z" fill="url(#ft)"/><path d="M0 4c0-.8.700-1.500 1.500-1.500h13.300c.8 0 1.500.7 1.500 1.500v7.700c0 .8-.7 1.500-1.500 1.500H1.500C.7 13.200 0 12.500 0 11.700z" fill="url(#fg)"/><path d="M0 11.200v.5c0 .8.700 1.500 1.500 1.500h13.300c.8 0 1.500-.7 1.500-1.500v-.5c0 .6-.5 1-1.100 1H1.100C.5 12.200 0 11.800 0 11.200z" fill="#e9b032"/></svg><div class="t" style="left:506.4px;top:702.8px;font-size:12.5px;line-height:12.5px;color:#ffffff;letter-spacing:-0.474px;width:79.60000000000002px;overflow:hidden;padding-bottom:4px;">2.KiemTheKingsoft</div>
<svg style="left:465.0px;top:736.9px" width="5" height="9" viewBox="0 0 5 9" stroke="#cfcfcf" stroke-width="1.500" fill="none" stroke-linecap="round" stroke-linejoin="round"><path d="M.7.700L4.300 4.500.7 8.300"/></svg><svg style="left:485.0px;top:733.8px" width="16.3" height="13.0" viewBox="0 0 16.3 13.2" preserveAspectRatio="none"><path d="M0 1.500C0 .7.700 0 1.500 0h4c.5 0 .9.200 1.200.5l1.100 1.200h6.900c.9 0 1.600.7 1.600 1.500v3H0z" fill="url(#ft)"/><path d="M0 4c0-.8.700-1.500 1.500-1.500h13.300c.8 0 1.500.7 1.500 1.500v7.700c0 .8-.7 1.500-1.500 1.500H1.500C.7 13.200 0 12.500 0 11.700z" fill="url(#fg)"/><path d="M0 11.200v.5c0 .8.700 1.500 1.500 1.500h13.300c.8 0 1.500-.7 1.500-1.500v-.5c0 .6-.5 1-1.100 1H1.100C.5 12.200 0 11.800 0 11.200z" fill="#e9b032"/></svg><div class="t" style="left:506.4px;top:734.8px;font-size:12.5px;line-height:12.5px;color:#ffffff;letter-spacing:-0.686px;width:79.60000000000002px;overflow:hidden;padding-bottom:4px;">2.KiemTheVNG</div>
<svg style="left:465.0px;top:768.9px" width="5" height="9" viewBox="0 0 5 9" stroke="#cfcfcf" stroke-width="1.500" fill="none" stroke-linecap="round" stroke-linejoin="round"><path d="M.7.700L4.300 4.500.7 8.300"/></svg><svg style="left:485.0px;top:765.8px" width="16.3" height="13.0" viewBox="0 0 16.3 13.2" preserveAspectRatio="none"><path d="M0 1.500C0 .7.700 0 1.500 0h4c.5 0 .9.200 1.200.5l1.100 1.200h6.900c.9 0 1.600.7 1.600 1.500v3H0z" fill="url(#ft)"/><path d="M0 4c0-.8.700-1.500 1.500-1.500h13.300c.8 0 1.500.7 1.500 1.500v7.700c0 .8-.7 1.500-1.500 1.500H1.500C.7 13.200 0 12.500 0 11.700z" fill="url(#fg)"/><path d="M0 11.200v.5c0 .8.700 1.500 1.500 1.500h13.300c.8 0 1.500-.7 1.500-1.500v-.5c0 .6-.5 1-1.100 1H1.100C.5 12.200 0 11.800 0 11.200z" fill="#e9b032"/></svg><div class="t" style="left:506.4px;top:766.8px;font-size:12.5px;line-height:12.5px;color:#ffffff;letter-spacing:-0.414px;width:79.60000000000002px;overflow:hidden;padding-bottom:4px;">3.PhongThanChina</div>
<div class="a" style="left:594px;top:269.500px;width:2px;height:50px;border-radius:1px;background:#9d9d9d"></div>
</div>
</body></html>
